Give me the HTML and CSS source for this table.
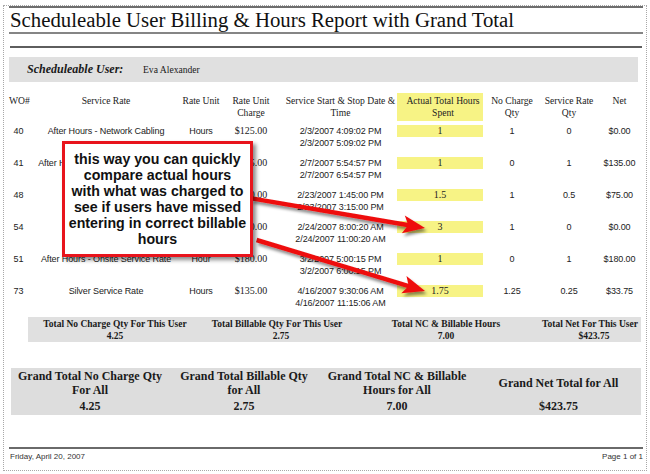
FILE: index.html
```html
<!DOCTYPE html>
<html>
<head>
<meta charset="utf-8">
<link rel="stylesheet" href="styles.css">
</head>
<body>
<div class="page">
  <div class="frame">
    <div class="topline"></div>
    <div class="title">Scheduleable User Billing &amp; Hours Report with Grand Total</div>
    <div class="rule1"></div>
    <div class="rule2"></div>
    <div class="userband">
      <span class="ulabel">Scheduleable User:</span>
      <span class="uname">Eva Alexander</span>
    </div>

    <div class="grid thead">
      <div class="h left">WO#</div>
      <div class="h">Service Rate</div>
      <div class="h">Rate Unit</div>
      <div class="h">Rate Unit<br>Charge</div>
      <div class="h">Service Start &amp; Stop Date &amp;<br>Time</div>
      <div class="h hl">Actual Total Hours<br>Spent</div>
      <div class="h">No Charge<br>Qty</div>
      <div class="h">Service Rate<br>Qty</div>
      <div class="h">Net</div>
    </div>

    <div class="rows">
      <div class="grid row">
        <div class="s">40</div><div class="s">After Hours - Network Cabling</div><div class="s">Hours</div><div class="m">$125.00</div>
        <div class="s">2/3/2007 4:09:02 PM<br>2/3/2007 5:09:02 PM</div><div class="y"><span>1</span></div>
        <div class="s">1</div><div class="s">0</div><div class="s">$0.00</div>
      </div>
      <div class="grid row">
        <div class="s">41</div><div class="s">After Hours - Remote Service Rate</div><div class="s"></div><div class="m">$135.00</div>
        <div class="s">2/7/2007 5:54:57 PM<br>2/7/2007 6:54:57 PM</div><div class="y"><span>1</span></div>
        <div class="s">0</div><div class="s">1</div><div class="s">$135.00</div>
      </div>
      <div class="grid row">
        <div class="s">48</div><div class="s"></div><div class="s"></div><div class="m">$150.00</div>
        <div class="s">2/23/2007 1:45:00 PM<br>2/23/2007 3:15:00 PM</div><div class="y"><span>1.5</span></div>
        <div class="s">1</div><div class="s">0.5</div><div class="s">$75.00</div>
      </div>
      <div class="grid row">
        <div class="s">54</div><div class="s"></div><div class="s"></div><div class="m">$150.00</div>
        <div class="s">2/24/2007 8:00:20 AM<br>2/24/2007 11:00:20 AM</div><div class="y"><span>3</span></div>
        <div class="s">1</div><div class="s">0</div><div class="s">$0.00</div>
      </div>
      <div class="grid row">
        <div class="s">51</div><div class="s">After Hours - Onsite Service Rate</div><div class="s">Hour</div><div class="m">$180.00</div>
        <div class="s">3/2/2007 5:00:15 PM<br>3/2/2007 6:00:15 PM</div><div class="y"><span>1</span></div>
        <div class="s">0</div><div class="s">1</div><div class="s">$180.00</div>
      </div>
      <div class="grid row">
        <div class="s">73</div><div class="s">Silver Service Rate</div><div class="s">Hours</div><div class="m">$135.00</div>
        <div class="s">4/16/2007 9:30:06 AM<br>4/16/2007 11:15:06 AM</div><div class="y"><span>1.75</span></div>
        <div class="s">1.25</div><div class="s">0.25</div><div class="s">$33.75</div>
      </div>
    </div>

    <div class="subtotal">
      <div class="sc"><div>Total No Charge Qty For This User</div><div>4.25</div></div>
      <div class="sc"><div>Total Billable Qty For This User</div><div class="v2">2.75</div></div>
      <div class="sc"><div>Total NC &amp; Billable Hours</div><div>7.00</div></div>
      <div class="sc"><div>Total Net For This User</div><div class="v2">$423.75</div></div>
    </div>

    <div class="grand">
      <div class="gc"><div class="gl">Grand Total No Charge Qty<br>For All</div><div class="gv">4.25</div></div>
      <div class="gc"><div class="gl">Grand Total Billable Qty<br>for All</div><div class="gv">2.75</div></div>
      <div class="gc"><div class="gl">Grand Total NC &amp; Billable<br>Hours for All</div><div class="gv">7.00</div></div>
      <div class="gc"><div class="gl">Grand Net Total for All</div><div class="gv">$423.75</div></div>
    </div>

    <div class="footrule"></div>
    <div class="foot">
      <span>Friday, April 20, 2007</span>
      <span>Page 1 of 1</span>
    </div>
  </div>

  <svg class="arrows" width="650" height="474" viewBox="0 0 650 474">
    <defs>
      <filter id="sh" x="-20%" y="-20%" width="140%" height="140%">
        <feDropShadow dx="2" dy="3" stdDeviation="1.6" flood-color="#000" flood-opacity="0.45"/>
      </filter>
    </defs>
    <g filter="url(#sh)">
      <line x1="251.6" y1="198.4" x2="409" y2="225.2" stroke="#ee1111" stroke-width="4.5"/>
      <polygon points="425,228 401.8,233.2 408.2,225.1 404.8,215.4" fill="#ee1111"/>
      <line x1="256.6" y1="240" x2="409.5" y2="286.3" stroke="#ee1111" stroke-width="4.5"/>
      <polygon points="425,291 401.3,293.2 408.7,286.1 406.5,276.0" fill="#ee1111"/>
    </g>
  </svg>

  <div class="callout"><p>this way you can quickly<br>compare actual hours<br>with what was charged to<br>see if users have missed<br>entering in correct billable<br>hours</p></div>
</div>
</body>
</html>
```

FILE: styles.css
```css
* { box-sizing: border-box; }
html, body { margin: 0; padding: 0; background: #fff; }
body { width: 650px; height: 474px; overflow: hidden; font-family: "Liberation Serif", "Times New Roman", serif; color: #1a1a1a; }

.page { position: relative; width: 650px; height: 474px; padding-top: 5px; padding-left: 3px; }

.frame {
  width: 644px;
  height: 466px;
  border: 1px dotted #a8a8a8;
  padding: 0 3px 0 5px;
}

.topline { height: 2px; background: #6e6e6e; }

.title {
  height: 24px;
  line-height: 24px;
  font-size: 20.8px;
  padding-left: 1px;
  color: #111;
  white-space: nowrap;
}

.rule1 { height: 2px; background: #858585; }
.rule2 { height: 2px; background: #5e5e5e; margin: 12px 1px 0 1px; }

.userband {
  margin-top: 9px;
  margin-right: 5px;
  height: 25px;
  background: #e0e0e0;
  display: flex;
  align-items: center;
  padding-left: 18px;
}
.ulabel { width: 116px; font-size: 12px; font-weight: bold; font-style: italic; }
.uname { font-size: 9.6px; }

.grid {
  display: grid;
  grid-template-columns: 19px 156px 34px 66px 113px 86px 58px 56px 45px;
}

.thead { margin-top: 11px; height: 28px; }
.h {
  font-size: 9.6px;
  line-height: 12px;
  padding-top: 2px;
  text-align: center;
  white-space: nowrap;
  display: flex;
  flex-direction: column;
  align-items: center;
  color: #222;
}
.h.left { align-items: flex-start; text-align: left; }
.h.hl { background: #f7f385; padding-left: 6px; }

.rows { margin-top: 4px; display: flex; flex-direction: column; gap: 8px; }
.row { height: 24px; }
.row > div {
  text-align: center;
  white-space: nowrap;
  line-height: 12px;
  display: flex;
  flex-direction: column;
  align-items: center;
}
.s { font-family: "Liberation Sans", Arial, sans-serif; font-size: 9px; color: #222; letter-spacing: -0.1px; }
.m { font-family: "Liberation Serif", "Times New Roman", serif; font-size: 10px; color: #222; }
.y { font-family: "Liberation Serif", "Times New Roman", serif; font-size: 10px; color: #222; }
.y span { display: block; width: 100%; height: 12px; background: #f7f385; text-align: center; }

.subtotal {
  margin: 8px 2px 0 19px;
  height: 25px;
  background: #e0e0e0;
  padding-top: 1px;
  display: grid;
  grid-template-columns: 174px 150px 188px 100px;
  font-size: 9.5px;
  font-weight: bold;
  line-height: 12px;
}
.sc { text-align: center; white-space: nowrap; display: flex; flex-direction: column; align-items: center; }
.sc .v2 { padding-left: 8px; }

.grand {
  margin: 26px 2px 0 2px;
  height: 47px;
  background: #dddddd;
  padding-top: 1px;
  display: grid;
  grid-template-columns: 158px 150px 156px 167px;
  font-size: 12px;
  font-weight: bold;
  line-height: 14px;
}
.gc { display: flex; flex-direction: column; align-items: center; text-align: center; white-space: nowrap; }
.gl { height: 28px; display: flex; align-items: center; justify-content: center; }
.gv { margin-top: 2px; }

.footrule { margin-top: 32px; height: 2px; background: #6a6a6a; }
.foot {
  margin-top: 3px;
  display: flex;
  justify-content: space-between;
  font-family: "Liberation Sans", Arial, sans-serif;
  font-size: 8px;
  line-height: 10px;
  color: #333;
  padding-left: 1px;
}

.arrows { position: absolute; left: 0; top: 0; pointer-events: none; }

.callout {
  position: absolute;
  left: 62px;
  top: 141px;
  width: 191px;
  height: 116px;
  background: #fff;
  border: 3px solid #e8141c;
  box-shadow: 3px 3px 4px rgba(0, 0, 0, 0.45);
  font-family: "Liberation Sans", Arial, sans-serif;
  font-weight: bold;
  font-size: 14.2px;
  line-height: 16px;
  color: #111;
  text-align: center;
  display: flex;
  align-items: center;
  justify-content: center;
  padding: 0;
  white-space: nowrap;
}
.callout p { margin: 0; }
```
